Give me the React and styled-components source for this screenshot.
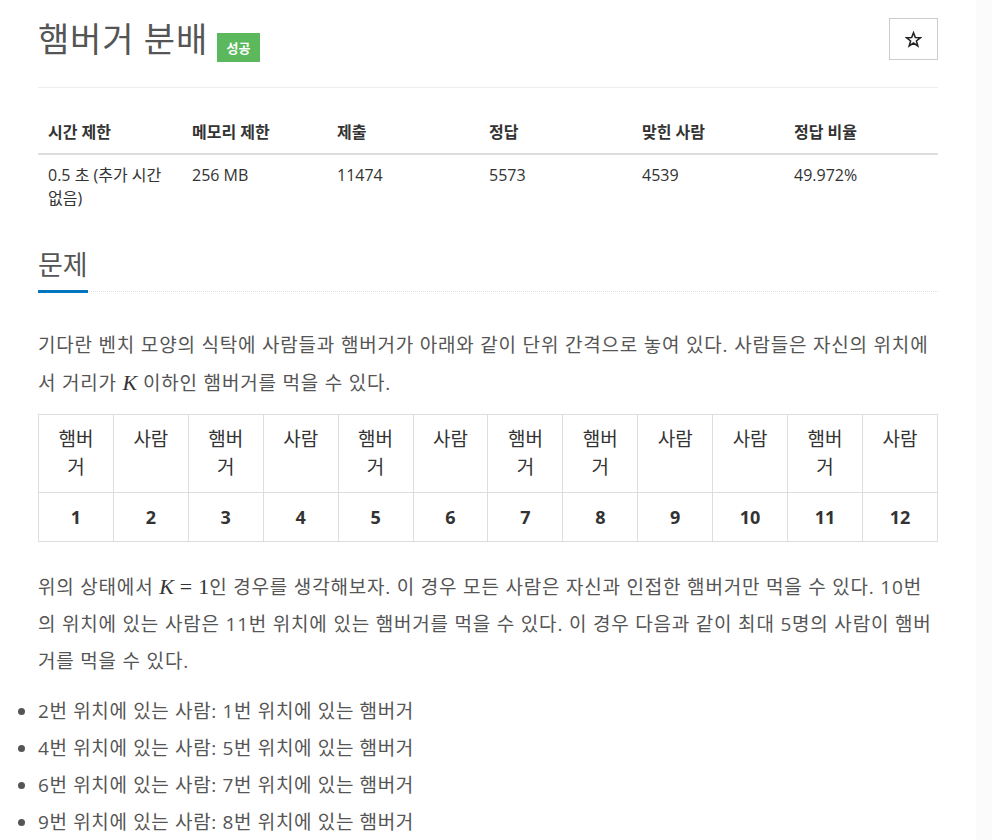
import React from 'react';
import styled, { createGlobalStyle } from 'styled-components';

const GlobalStyle = createGlobalStyle`
  html, body {
    margin: 0;
    padding: 0;
    background: linear-gradient(to right, #fff 976px, #fbfbfb 976px);
  }
  body {
    font-family: "Open Sans", "Noto Sans CJK KR", sans-serif;
    color: #333;
  }
`;

const Page = styled.div`
  width: 900px;
  padding: 18px 0 40px 38px;
`;

const HeaderRow = styled.div`
  display: flex;
  justify-content: space-between;
  align-items: flex-start;
`;

const TitleGroup = styled.div`
  display: flex;
  align-items: flex-start;
`;

const Title = styled.h1`
  margin: 3px 0 0;
  font-size: 34px;
  line-height: 37px;
  letter-spacing: 0.8px;
  font-weight: 400;
  color: #555;
`;

const Badge = styled.span`
  margin: 15px 0 0 9px;
  width: 43px;
  height: 29px;
  display: flex;
  align-items: center;
  justify-content: center;
  background: #5cb85c;
  color: #fff;
  font-size: 13px;
  font-weight: 600;
`;

const StarButton = styled.button`
  width: 49px;
  height: 42px;
  border: 1px solid #ccc;
  background: #fff;
  display: flex;
  align-items: center;
  justify-content: center;
  padding: 0;
  cursor: pointer;
`;

const Rule = styled.hr`
  margin: 25px 0 0;
  border: 0;
  border-top: 1px solid #eee;
`;

const InfoTable = styled.div`
  margin-top: 28px;
  display: grid;
  grid-template-columns: 144px 145px 152px 153px 152px 154px;
  font-size: 16px;
  line-height: 23px;
  color: #333;
`;

const InfoHead = styled.div`
  padding: 5px 10px 9px;
  font-weight: 700;
  border-bottom: 2px solid #ddd;
`;

const InfoCell = styled.div`
  padding: 9px 10px 8px;
`;

const SectionHead = styled.div`
  margin-top: 32px;
  border-bottom: 1px dotted #ddd;
`;

const SectionTitle = styled.h2`
  display: inline-block;
  margin: 0 0 -2px;
  padding-bottom: 10px;
  font-size: 27px;
  line-height: 30px;
  font-weight: 400;
  color: #555;
  border-bottom: 3px solid #0076c0;
`;

const Paragraph = styled.p`
  margin: ${({ $top }) => $top}px 0 0;
  font-size: 19px;
  line-height: 37.3px;
  letter-spacing: 0.8px;
  color: #555;
`;

const MathVar = styled.span`
  font-family: "Liberation Serif", "DejaVu Serif", serif;
  font-style: ${({ $italic }) => ($italic ? 'italic' : 'normal')};
  font-size: 22px;
  letter-spacing: 0;
  color: #333;
  margin: 0 ${({ $gap }) => $gap || 0}px;
`;

const PosTable = styled.table`
  margin-top: 11px;
  width: 900px;
  border-collapse: collapse;
  table-layout: fixed;
  line-height: 28px;
  color: #333;
`;

const PosCell = styled.td`
  border: 1px solid #ddd;
  padding: ${({ $bold }) => ($bold ? '10px 12px 10px' : '10px 12px 11px')};
  text-align: center;
  vertical-align: top;
  font-weight: ${({ $bold }) => ($bold ? 700 : 400)};
  font-size: ${({ $bold }) => ($bold ? '18px' : '19px')};
`;

const List = styled.ul`
  margin: 13px 0 0;
  padding: 0;
  font-size: 19px;
  line-height: 37px;
  letter-spacing: 0.65px;
  color: #555;
`;

const Item = styled.li`
  &::marker {
    color: #555;
  }
`;

const StarIcon = () => (
  <svg width="17" height="17" viewBox="0 0 24 24" fill="none" stroke="#222" strokeWidth="2.2" strokeLinejoin="miter">
    <polygon points="12,2.5 14.6,9.3 21.8,9.5 16.1,14 18.1,21 12,17 5.9,21 7.9,14 2.2,9.5 9.4,9.3" />
  </svg>
);

const infoHeads = ['시간 제한', '메모리 제한', '제출', '정답', '맞힌 사람', '정답 비율'];
const infoValues = ['0.5 초 (추가 시간 없음)', '256 MB', '11474', '5573', '4539', '49.972%'];

const positions = ['햄버거', '사람', '햄버거', '사람', '햄버거', '사람', '햄버거', '햄버거', '사람', '사람', '햄버거', '사람'];

const pairs = [
  ['2', '1'],
  ['4', '5'],
  ['6', '7'],
  ['9', '8'],
];

export default function App() {
  return (
    <>
      <GlobalStyle />
      <Page>
        <HeaderRow>
          <TitleGroup>
            <Title>햄버거 분배</Title>
            <Badge>성공</Badge>
          </TitleGroup>
          <StarButton aria-label="즐겨찾기">
            <StarIcon />
          </StarButton>
        </HeaderRow>
        <Rule />

        <InfoTable>
          {infoHeads.map((h) => (
            <InfoHead key={h}>{h}</InfoHead>
          ))}
          {infoValues.map((v) => (
            <InfoCell key={v}>{v}</InfoCell>
          ))}
        </InfoTable>

        <SectionHead>
          <SectionTitle>문제</SectionTitle>
        </SectionHead>

        <Paragraph $top={35}>
          기다란 벤치 모양의 식탁에 사람들과 햄버거가 아래와 같이 단위 간격으로 놓여 있다. 사람들은 자신의 위치에서 거리가{' '}
          <MathVar $italic>K</MathVar> 이하인 햄버거를 먹을 수 있다.
        </Paragraph>

        <PosTable>
          <tbody>
            <tr>
              {positions.map((p, i) => (
                <PosCell key={i}>{p}</PosCell>
              ))}
            </tr>
            <tr>
              {positions.map((_, i) => (
                <PosCell key={i} $bold>
                  {i + 1}
                </PosCell>
              ))}
            </tr>
          </tbody>
        </PosTable>

        <Paragraph $top={26}>
          위의 상태에서 <MathVar $italic>K</MathVar>
          <MathVar $gap={6}>=</MathVar>
          <MathVar>1</MathVar>인 경우를 생각해보자. 이 경우 모든 사람은 자신과 인접한 햄버거만 먹을 수 있다. 10번의 위치에 있는 사람은 11번 위치에 있는 햄버거를 먹을 수 있다. 이 경우 다음과 같이 최대 5명의 사람이 햄버거를 먹을 수 있다.
        </Paragraph>

        <List>
          {pairs.map(([a, b]) => (
            <Item key={a}>
              {a}번 위치에 있는 사람: {b}번 위치에 있는 햄버거
            </Item>
          ))}
        </List>
      </Page>
    </>
  );
}
